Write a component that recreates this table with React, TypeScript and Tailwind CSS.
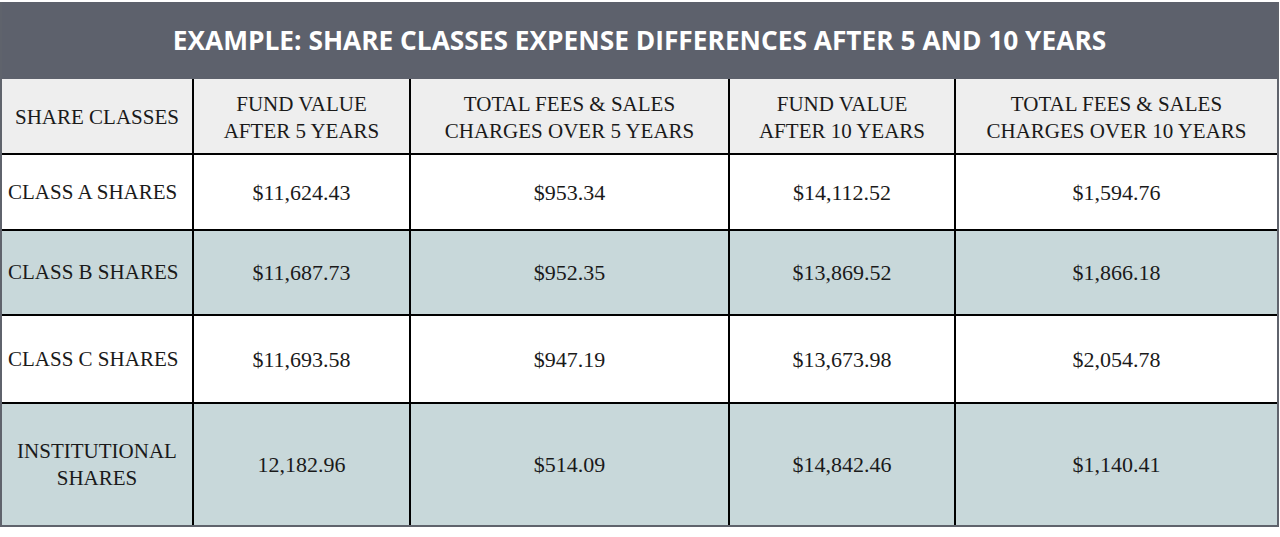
import React from 'react';

const rows = [
  { name: 'CLASS A SHARES', v5: '$11,624.43', f5: '$953.34', v10: '$14,112.52', f10: '$1,594.76', shaded: false, h: 'h-[76px]' },
  { name: 'CLASS B SHARES', v5: '$11,687.73', f5: '$952.35', v10: '$13,869.52', f10: '$1,866.18', shaded: true, h: 'h-[85px]' },
  { name: 'CLASS C SHARES', v5: '$11,693.58', f5: '$947.19', v10: '$13,673.98', f10: '$2,054.78', shaded: false, h: 'h-[88px]' },
  { name: 'INSTITUTIONAL SHARES', v5: '12,182.96', f5: '$514.09', v10: '$14,842.46', f10: '$1,140.41', shaded: true, h: 'h-[122px]' },
];

const App: React.FC = () => {
  return (
    <div className="w-[1280px] h-[537px] bg-white pt-[2px]">
      <div className="w-[1279px] border-x-2 border-b-2 border-[#5f636c] font-['Liberation_Serif',serif] text-[#1a1a1a]">
        <div className="h-[77px] bg-[#5d616c] flex items-center justify-center">
          <h1 className="font-['Open_Sans',sans-serif] font-bold text-white text-[26.3px]">
            EXAMPLE: SHARE CLASSES EXPENSE DIFFERENCES AFTER 5 AND 10 YEARS
          </h1>
        </div>
        <table className="w-full border-collapse table-fixed text-[21px] leading-[27px]">
          <colgroup>
            <col className="w-[191px]" />
            <col className="w-[217px]" />
            <col className="w-[319px]" />
            <col className="w-[226px]" />
            <col />
          </colgroup>
          <thead>
            <tr className="h-[75px] bg-[#eeeeee]">
              <th className="font-normal pt-[3px] border-r-2 border-b-2 border-black">SHARE CLASSES</th>
              <th className="font-normal pt-[3px] border-x-2 border-b-2 border-black">FUND VALUE<br />AFTER 5 YEARS</th>
              <th className="font-normal pt-[3px] border-x-2 border-b-2 border-black">TOTAL FEES &amp; SALES<br />CHARGES OVER 5 YEARS</th>
              <th className="font-normal pt-[3px] border-x-2 border-b-2 border-black">FUND VALUE<br />AFTER 10 YEARS</th>
              <th className="font-normal pt-[3px] border-l-2 border-b-2 border-black">TOTAL FEES &amp; SALES<br />CHARGES OVER 10 YEARS</th>
            </tr>
          </thead>
          <tbody>
            {rows.map((r, i) => {
              const b = i < rows.length - 1 ? 'border-b-2' : '';
              return (
                <tr key={i} className={`${r.h} ${r.shaded ? 'bg-[#c8d8da]' : 'bg-white'}`}>
                  <td className={`border-r-2 border-black ${b} ${r.name === 'INSTITUTIONAL SHARES' ? 'text-center' : 'pl-[6px]'}`}>
                    {r.name === 'INSTITUTIONAL SHARES' ? (<>INSTITUTIONAL<br />SHARES</>) : r.name}
                  </td>
                  <td className={`text-center text-[22px] border-x-2 border-black ${b}`}>{r.v5}</td>
                  <td className={`text-center text-[22px] border-x-2 border-black ${b}`}>{r.f5}</td>
                  <td className={`text-center text-[22px] border-x-2 border-black ${b}`}>{r.v10}</td>
                  <td className={`text-center text-[22px] border-l-2 border-black ${b}`}>{r.f10}</td>
                </tr>
              );
            })}
          </tbody>
        </table>
      </div>
    </div>
  );
};

export default App;
